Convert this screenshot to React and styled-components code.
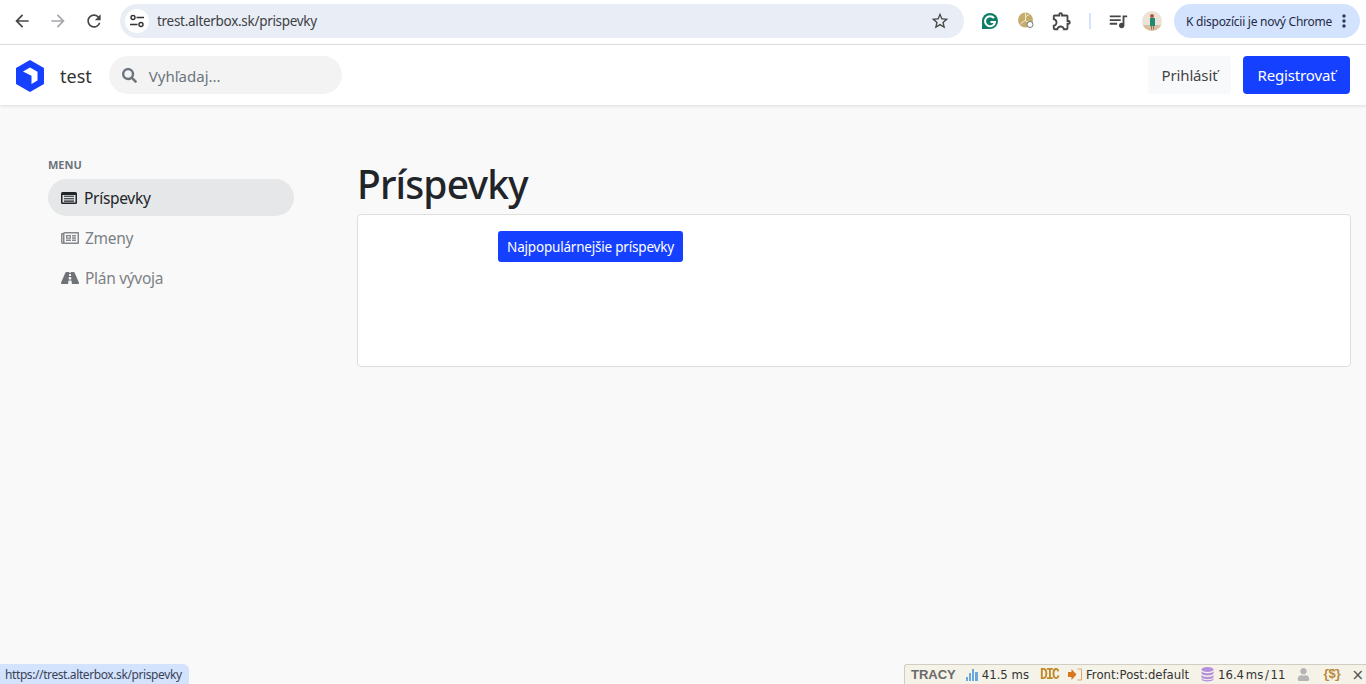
import React from 'react';
import styled, { createGlobalStyle } from 'styled-components';
import { MdArrowBack, MdArrowForward, MdRefresh, MdStarBorder, MdOutlineExtension, MdQueueMusic, MdMoreVert } from 'react-icons/md';
import { FaSearch, FaRegNewspaper, FaRoad, FaUser } from 'react-icons/fa';

const Global = createGlobalStyle`
  html, body { margin: 0; padding: 0; height: 100%; overflow: hidden; }
  body { background: #f9f9f9; font-family: "Noto Sans", "Open Sans", sans-serif; }
  * { box-sizing: border-box; }
`;

const Page = styled.div`
  height: 100vh;
  display: flex;
  flex-direction: column;
`;

const Chrome = styled.div`
  height: 45px;
  flex: none;
  background: #fff;
  border-bottom: 1px solid #dfe1e5;
  display: flex;
  align-items: center;
  padding: 0 6px 2px 10px;
`;

const NavBtn = styled.span`
  width: 24px;
  height: 24px;
  margin-right: ${p => p.$gap || 12}px;
  display: flex;
  align-items: center;
  justify-content: center;
  color: ${p => (p.$off ? '#a5a7aa' : '#474747')};
  font-size: 20px;
`;

const Omnibox = styled.div`
  width: 844px;
  height: 34px;
  margin-left: -2px;
  border-radius: 17px;
  background: #e9eef6;
  display: flex;
  align-items: center;
  padding: 0 14px 0 5px;
`;

const TuneBadge = styled.span`
  width: 24px;
  height: 24px;
  border-radius: 50%;
  background: #fff;
  display: flex;
  align-items: center;
  justify-content: center;
`;

const Url = styled.span`
  margin-left: 8px;
  flex: 1;
  font-size: 13.5px;
  letter-spacing: -0.3px;
  color: #3c4043;
`;

const Tools = styled.div`
  display: flex;
  align-items: center;
  margin-left: 14px;
  gap: 12px;
  color: #474747;
`;

const ToolIcon = styled.span`
  width: 24px;
  height: 24px;
  display: flex;
  align-items: center;
  justify-content: center;
  font-size: 22px;
`;

const Sep = styled.span`
  width: 2px;
  height: 16px;
  margin: 0 3px;
  background: #d3e3fd;
`;

const Avatar = styled.span`
  width: 20px;
  height: 20px;
  margin-left: 12px;
  border-radius: 50%;
  overflow: hidden;
  display: block;
`;

const Update = styled.div`
  margin-left: 12px;
  height: 34px;
  width: 186px;
  border-radius: 17px;
  background: #d3e3fd;
  display: flex;
  align-items: center;
  justify-content: space-between;
  padding: 0 6px 0 12px;
  font-size: 12px;
  letter-spacing: -0.25px;
  color: #1f2a44;
  white-space: nowrap;
  svg { font-size: 20px; color: #2b3a55; flex: none; }
`;

const Header = styled.header`
  height: 60px;
  flex: none;
  background: #fff;
  box-shadow: 0 1px 3px rgba(0, 0, 0, 0.12);
  display: flex;
  align-items: center;
  padding: 0 16px;
  position: relative;
`;

const LogoMark = styled.svg`
  width: 28px;
  height: 32px;
  margin-top: 2px;
  flex: none;
`;

const Brand = styled.span`
  margin-left: 16px;
  padding-top: 2px;
  font-size: 18px;
  color: #333;
`;

const Search = styled.div`
  margin-left: 17px;
  width: 233px;
  height: 38px;
  border-radius: 19px;
  background: #f3f3f4;
  display: flex;
  align-items: center;
  padding: 2px 0 0 13px;
  gap: 12px;
  color: #6c757d;
  font-size: 15px;
  svg { font-size: 15px; margin-top: -1px; }
`;

const Spacer = styled.div`
  flex: 1;
`;

const Login = styled.button`
  width: 83px;
  height: 38px;
  border: 0;
  border-radius: 4px;
  background: #f8f9fa;
  color: #444;
  font: inherit;
  font-size: 15px;
  letter-spacing: -0.15px;
  padding: 0;
`;

const Signup = styled.button`
  width: 107px;
  height: 38px;
  margin-left: 12px;
  border: 0;
  border-radius: 4px;
  background: #1640ff;
  color: #fff;
  font: inherit;
  font-size: 15px;
  letter-spacing: -0.15px;
  padding: 0;
`;

const Body = styled.div`
  flex: 1;
  display: flex;
  padding: 51px 15px 0 48px;
`;

const Side = styled.aside`
  width: 246px;
  flex: none;
  margin-right: 63px;
`;

const MenuLabel = styled.div`
  height: 18px;
  line-height: 18px;
  font-size: 11px;
  font-weight: 700;
  color: #6c757d;
  margin-bottom: 5px;
`;

const Item = styled.div`
  height: 37px;
  margin-bottom: 3px;
  border-radius: 19px;
  display: flex;
  align-items: center;
  padding-left: 13px;
  gap: ${p => p.$gap}px;
  font-size: 15.5px;
  letter-spacing: -0.3px;
  color: ${p => (p.$active ? '#212529' : '#7d8186')};
  background: ${p => (p.$active ? '#e6e7e8' : 'transparent')};
  svg { font-size: 18px; flex: none; }
`;

const Content = styled.main`
  flex: 1;
  min-width: 0;
`;

const Title = styled.h1`
  margin: 0;
  height: 58px;
  line-height: 56px;
  font-size: 39px;
  font-weight: 550;
  letter-spacing: -0.85px;
  color: #212529;
`;

const Card = styled.section`
  height: 153px;
  background: #fff;
  border: 1px solid #dfdfdf;
  border-radius: 4px;
  padding: 16px 0 0 140px;
`;

const TopButton = styled.button`
  width: 185px;
  height: 31px;
  border: 0;
  border-radius: 3px;
  background: #1640ff;
  color: #fff;
  font: inherit;
  font-size: 13.5px;
  letter-spacing: -0.2px;
  padding: 0;
`;

const StatusBubble = styled.div`
  position: fixed;
  left: 0;
  bottom: 0;
  width: 189px;
  height: 20px;
  background: #d3e3fd;
  border-top-right-radius: 6px;
  padding-left: 5px;
  line-height: 21px;
  font-size: 12px;
  letter-spacing: -0.4px;
  color: #3a4256;
  white-space: nowrap;
`;

const Tracy = styled.div`
  position: fixed;
  right: 0;
  bottom: 0;
  width: 462px;
  height: 20px;
  background: #f5f2e8;
  border: 1px solid #cfcdc4;
  border-width: 1px 0 0 1px;
  border-top-left-radius: 3px;
  display: flex;
  align-items: center;
  padding-left: 6px;
  font-family: "DejaVu Sans", sans-serif;
  color: #333;
  white-space: nowrap;
`;

const TracyLogo = styled.span`
  font-family: "Liberation Sans", sans-serif;
  font-weight: 700;
  font-size: 13px;
  color: #6a6a6a;
  margin-right: 10px;
`;

const Panel = styled.span`
  display: flex;
  align-items: center;
  gap: 4px;
  margin-right: ${p => p.$gap}px;
  font-size: 11.7px;
  word-spacing: ${p => p.$tight ? '-2px' : '0'};
`;

const Dic = styled.span`
  font-family: "Liberation Sans Narrow", "Liberation Mono", monospace;
  font-weight: 700;
  font-size: 13px;
  letter-spacing: -1.8px;
  color: #c08a2a;
  transform: scaleY(1.2);
  margin-right: 13px;
  width: 15px;
`;

const Dollar = styled.span`
  font-family: "Liberation Mono", monospace;
  font-weight: 700;
  font-size: 13px;
  letter-spacing: -2px;
  color: #b98a3a;
  width: 16px;
  margin-right: 13px;
`;

const Close = styled.span`
  font-size: 15px;
  color: #555;
`;

const Logo = () => (
  <LogoMark viewBox="0 0 28 32">
    <path d="M14 0 28 8V24L14 32 0 24V8Z" fill="#1640ff" />
    <path d="M14 7.500 21.500 11.800V20.500L15.500 24V15.800L7 11.500Z" fill="#fff" />
  </LogoMark>
);

const TuneIcon = () => (
  <svg width="16" height="16" viewBox="0 0 16 16">
    <circle cx="4" cy="4.500" r="2" fill="none" stroke="#333" strokeWidth="1.400" />
    <path d="M7.500 4.500H15M1 11.500H8.500" stroke="#333" strokeWidth="1.400" />
    <circle cx="12" cy="11.500" r="2" fill="none" stroke="#333" strokeWidth="1.400" />
  </svg>
);

const PostsIcon = () => (
  <svg width="16" height="14" viewBox="0 0 16 14">
    <rect x="0" y="1" width="16" height="12" rx="1.500" fill="#212529" />
    <rect x="1.500" y="4" width="13" height="7.500" fill="#dfe0e2" />
    <path d="M3 5.300h10M3 7.700h10M3 10.100h10" stroke="#212529" strokeWidth="1.100" />
  </svg>
);

const Grammarly = () => (
  <svg width="18" height="18" viewBox="0 0 18 18">
    <path d="M9 1a8 8 0 1 1 0 16H1V9a8 8 0 0 1 8-8Z" fill="#0f7d65" />
    <path d="M13 6.200A5 5 0 1 0 14 10H9.500" fill="none" stroke="#fff" strokeWidth="2" />
  </svg>
);

const Cookie = () => (
  <svg width="18" height="18" viewBox="0 0 18 18">
    <circle cx="8.500" cy="8" r="7.500" fill="#c4ad6b" />
    <path d="M8.500 1v8M8.500 5l4-3M3.500 12l5-4M8.500 9l5 2" stroke="#f3ecd3" strokeWidth="1" fill="none" />
    <circle cx="13" cy="12.500" r="3" fill="#fff" stroke="#777" strokeWidth="1" />
  </svg>
);

const AvatarArt = () => (
  <svg width="20" height="20" viewBox="0 0 20 20">
    <rect width="20" height="20" fill="#ece3d6" />
    <rect y="14" width="20" height="6" fill="#d8bfa2" />
    <rect x="8" y="7" width="5" height="8" fill="#1f8a70" />
    <circle cx="10" cy="5" r="2" fill="#b5533c" />
    <rect x="9" y="15" width="1" height="3.500" fill="#a8705a" />
    <rect x="11" y="15" width="1" height="3.500" fill="#a8705a" />
  </svg>
);

const Bars = () => (
  <svg width="12" height="13" viewBox="0 0 12 13">
    <path d="M0 9h2v4H0zM3 5h2v8H3zM6 1h2v12H6zM9 4h3v9H9z" fill="#6aa8e0" />
  </svg>
);

const Route = () => (
  <svg width="14" height="13" viewBox="0 0 14 13">
    <path d="M0 4h3.500V1l5 5.500-5 5.500V9H0Z" fill="#d9771f" />
    <path d="M9.500 1h4v11h-4" fill="none" stroke="#e2a66a" strokeWidth="1" />
  </svg>
);

const Db = () => (
  <svg width="13" height="15" viewBox="0 0 13 15">
    <ellipse cx="6.500" cy="2.500" rx="6" ry="2.500" fill="#b48fdb" />
    <path d="M.5 4.200c1 2.600 11 2.600 12 0V6.500c-1 2.600-11 2.600-12 0ZM.5 8c1 2.600 11 2.600 12 0v2.300c-1 2.600-11 2.600-12 0ZM.5 11.300c1 2.600 11 2.600 12 0V12.500c-1 2.600-11 2.600-12 0Z" fill="#b48fdb" />
  </svg>
);

export default function App() {
  return (
    <Page>
      <Global />
      <Chrome>
        <NavBtn><MdArrowBack /></NavBtn>
        <NavBtn $off><MdArrowForward /></NavBtn>
        <NavBtn $gap={16}><MdRefresh /></NavBtn>
        <Omnibox>
          <TuneBadge><TuneIcon /></TuneBadge>
          <Url>trest.alterbox.sk/prispevky</Url>
          <MdStarBorder size={20} color="#474747" />
        </Omnibox>
        <Tools>
          <ToolIcon><Grammarly /></ToolIcon>
          <ToolIcon><Cookie /></ToolIcon>
          <ToolIcon><MdOutlineExtension /></ToolIcon>
          <Sep />
          <ToolIcon><MdQueueMusic /></ToolIcon>
        </Tools>
        <Avatar><AvatarArt /></Avatar>
        <Update>
          K dispozícii je nový Chrome
          <MdMoreVert />
        </Update>
      </Chrome>
      <Header>
        <Logo />
        <Brand>test</Brand>
        <Search><FaSearch />Vyhľadaj...</Search>
        <Spacer />
        <Login>Prihlásiť</Login>
        <Signup>Registrovať</Signup>
      </Header>
      <Body>
        <Side>
          <MenuLabel>MENU</MenuLabel>
          <Item $active $gap={7}><PostsIcon />Príspevky</Item>
          <Item $gap={6}><FaRegNewspaper color="#85888c" />Zmeny</Item>
          <Item $gap={6}><FaRoad color="#6f7276" />Plán vývoja</Item>
        </Side>
        <Content>
          <Title>Príspevky</Title>
          <Card><TopButton>Najpopulárnejšie príspevky</TopButton></Card>
        </Content>
      </Body>
      <StatusBubble>https://trest.alterbox.sk/prispevky</StatusBubble>
      <Tracy>
        <TracyLogo>TRACY</TracyLogo>
        <Panel $gap={11}><Bars />41.5 ms</Panel>
        <Dic>DIC</Dic>
        <Panel $gap={12}><Route />Front:Post:default</Panel>
        <Panel $gap={12} $tight><Db />16.4 ms / 11</Panel>
        <Panel $gap={12}><FaUser size={13} color="#b5b5b5" /></Panel>
        <Dollar>{'{$}'}</Dollar>
        <Close>×</Close>
      </Tracy>
    </Page>
  );
}
